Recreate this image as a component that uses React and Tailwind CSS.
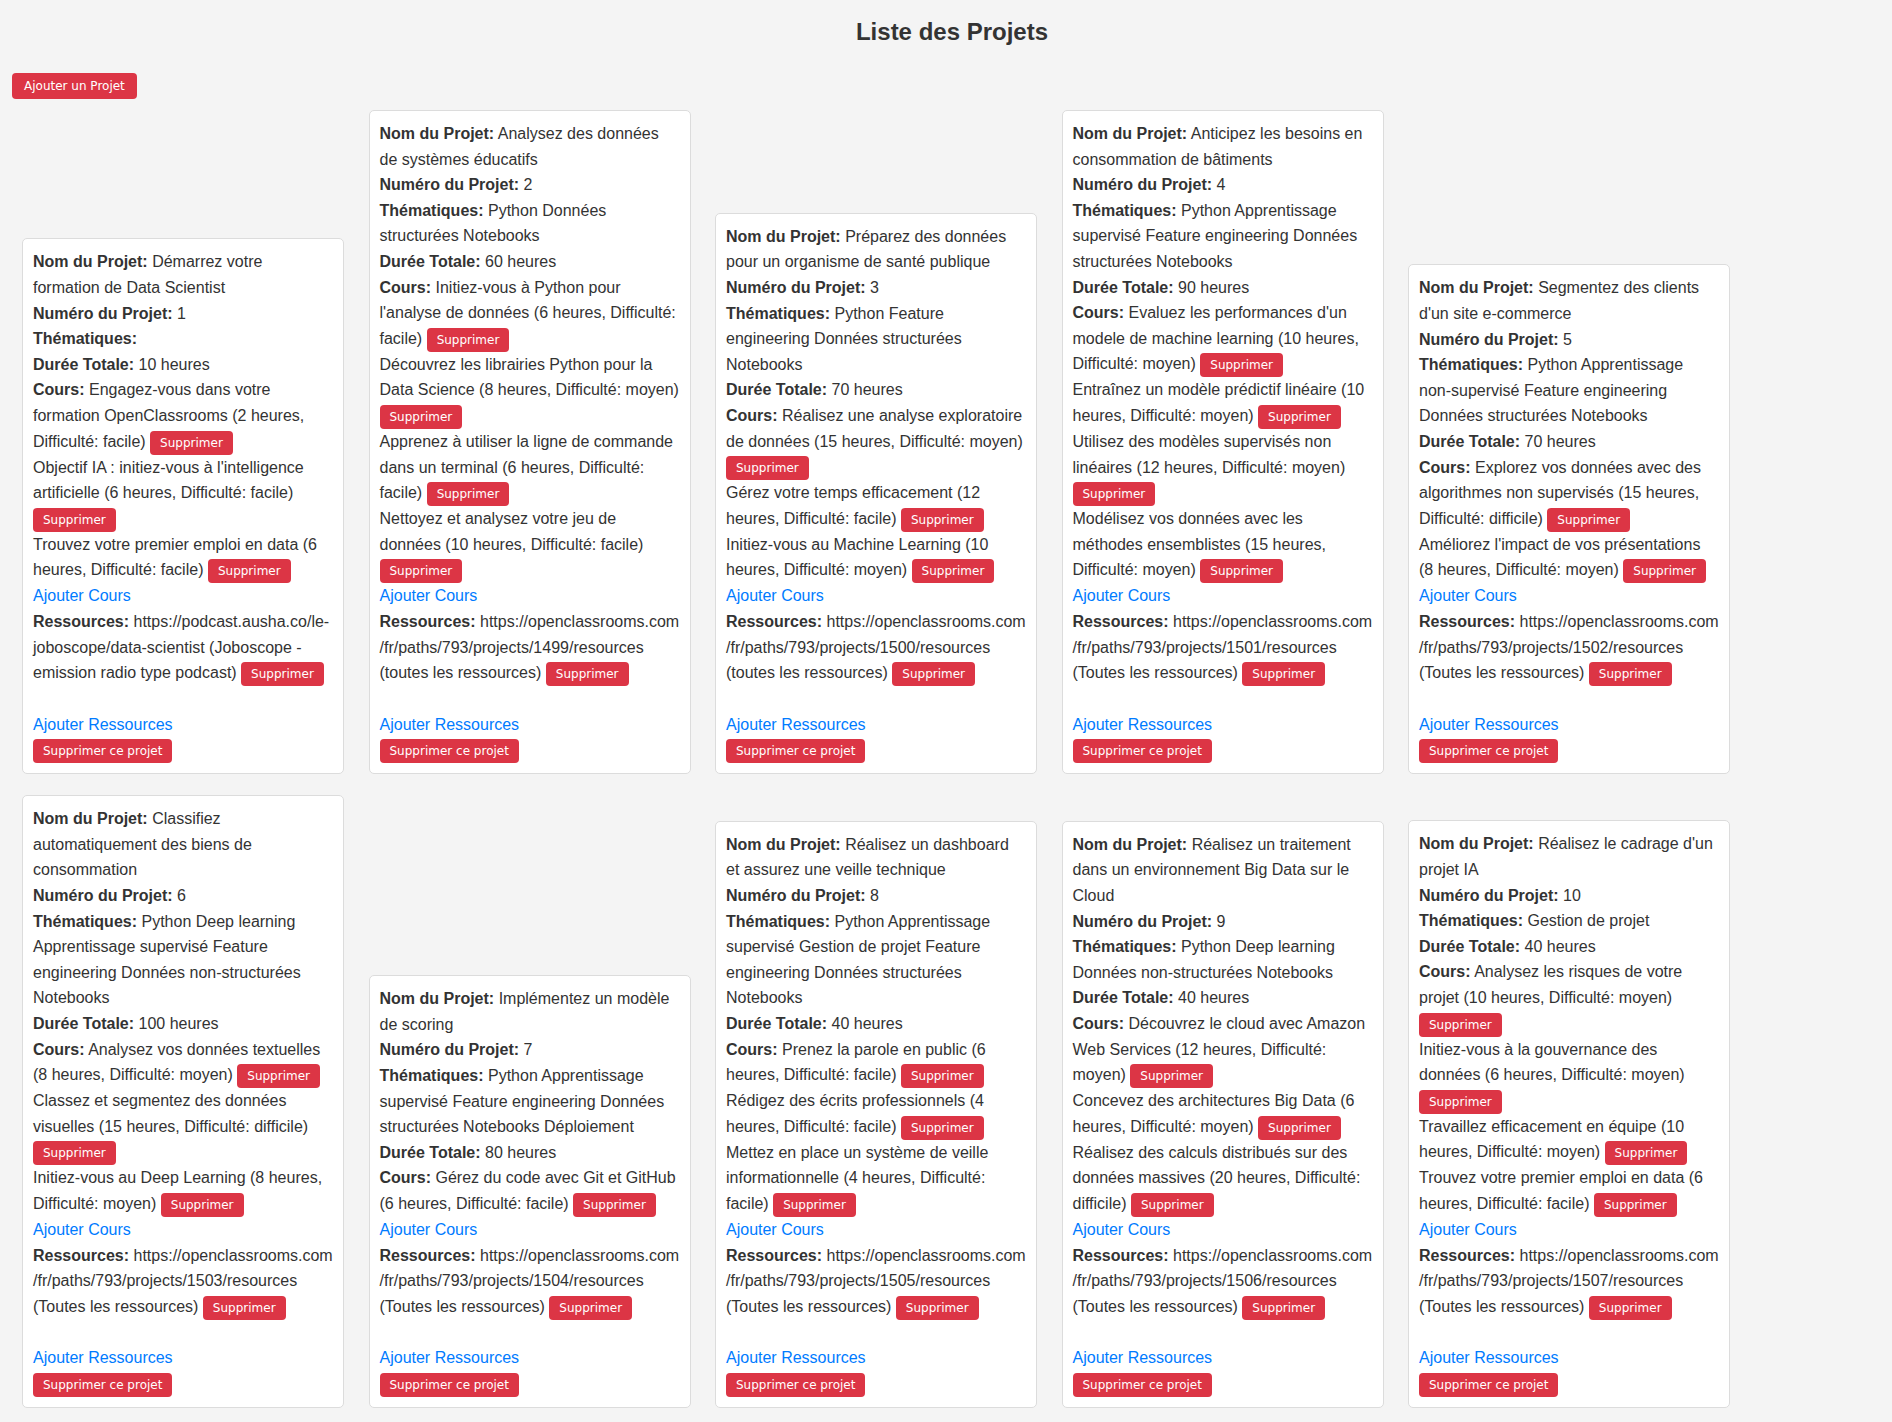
import { Fragment } from 'react';

const oc = (id, label) => ({
    url: 'https://openclassrooms.com',
    path: `/fr/paths/793/projects/${id}/resources`,
    label,
});

const projets = [
    {
        nom: 'Démarrez votre formation de Data Scientist',
        numero: 1,
        thematiques: '',
        duree: 10,
        cours: [
            ['Engagez-vous dans votre formation OpenClassrooms', 2, 'facile'],
            ["Objectif IA : initiez-vous à l'intelligence artificielle", 6, 'facile'],
            ['Trouvez votre premier emploi en data', 6, 'facile'],
        ],
        ressource: { text: 'https://podcast.ausha.co/le-joboscope/data-scientist (Joboscope - emission radio type podcast)' },
    },
    {
        nom: 'Analysez des données de systèmes éducatifs',
        numero: 2,
        thematiques: 'Python Données structurées Notebooks',
        duree: 60,
        cours: [
            ["Initiez-vous à Python pour l'analyse de données", 6, 'facile'],
            ['Découvrez les librairies Python pour la Data Science', 8, 'moyen'],
            ['Apprenez à utiliser la ligne de commande dans un terminal', 6, 'facile'],
            ['Nettoyez et analysez votre jeu de données', 10, 'facile'],
        ],
        ressource: oc(1499, '(toutes les ressources)'),
    },
    {
        nom: 'Préparez des données pour un organisme de santé publique',
        numero: 3,
        thematiques: 'Python Feature engineering Données structurées Notebooks',
        duree: 70,
        cours: [
            ['Réalisez une analyse exploratoire de données', 15, 'moyen'],
            ['Gérez votre temps efficacement', 12, 'facile'],
            ['Initiez-vous au Machine Learning', 10, 'moyen'],
        ],
        ressource: oc(1500, '(toutes les ressources)'),
    },
    {
        nom: 'Anticipez les besoins en consommation de bâtiments',
        numero: 4,
        thematiques: 'Python Apprentissage supervisé Feature engineering Données structurées Notebooks',
        duree: 90,
        cours: [
            ["Evaluez les performances d'un modele de machine learning", 10, 'moyen'],
            ['Entraînez un modèle prédictif linéaire', 10, 'moyen'],
            ['Utilisez des modèles supervisés non linéaires', 12, 'moyen'],
            ['Modélisez vos données avec les méthodes ensemblistes', 15, 'moyen'],
        ],
        ressource: oc(1501, '(Toutes les ressources)'),
    },
    {
        nom: "Segmentez des clients d'un site e-commerce",
        numero: 5,
        thematiques: 'Python Apprentissage non-supervisé Feature engineering Données structurées Notebooks',
        duree: 70,
        cours: [
            ['Explorez vos données avec des algorithmes non supervisés', 15, 'difficile'],
            ["Améliorez l'impact de vos présentations", 8, 'moyen'],
        ],
        ressource: oc(1502, '(Toutes les ressources)'),
    },
    {
        nom: 'Classifiez automatiquement des biens de consommation',
        numero: 6,
        thematiques: 'Python Deep learning Apprentissage supervisé Feature engineering Données non-structurées Notebooks',
        duree: 100,
        cours: [
            ['Analysez vos données textuelles', 8, 'moyen'],
            ['Classez et segmentez des données visuelles', 15, 'difficile'],
            ['Initiez-vous au Deep Learning', 8, 'moyen'],
        ],
        ressource: oc(1503, '(Toutes les ressources)'),
    },
    {
        nom: 'Implémentez un modèle de scoring',
        numero: 7,
        thematiques: 'Python Apprentissage supervisé Feature engineering Données structurées Notebooks Déploiement',
        duree: 80,
        cours: [['Gérez du code avec Git et GitHub', 6, 'facile']],
        ressource: oc(1504, '(Toutes les ressources)'),
    },
    {
        nom: 'Réalisez un dashboard et assurez une veille technique',
        numero: 8,
        thematiques: 'Python Apprentissage supervisé Gestion de projet Feature engineering Données structurées Notebooks',
        duree: 40,
        cours: [
            ['Prenez la parole en public', 6, 'facile'],
            ['Rédigez des écrits professionnels', 4, 'facile'],
            ['Mettez en place un système de veille informationnelle', 4, 'facile'],
        ],
        ressource: oc(1505, '(Toutes les ressources)'),
    },
    {
        nom: 'Réalisez un traitement dans un environnement Big Data sur le Cloud',
        numero: 9,
        thematiques: 'Python Deep learning Données non-structurées Notebooks',
        duree: 40,
        cours: [
            ['Découvrez le cloud avec Amazon Web Services', 12, 'moyen'],
            ['Concevez des architectures Big Data', 6, 'moyen'],
            ['Réalisez des calculs distribués sur des données massives', 20, 'difficile'],
        ],
        ressource: oc(1506, '(Toutes les ressources)'),
    },
    {
        nom: "Réalisez le cadrage d'un projet IA",
        numero: 10,
        thematiques: 'Gestion de projet',
        duree: 40,
        cours: [
            ['Analysez les risques de votre projet', 10, 'moyen'],
            ['Initiez-vous à la gouvernance des données', 6, 'moyen'],
            ['Travaillez efficacement en équipe', 10, 'moyen'],
            ['Trouvez votre premier emploi en data', 6, 'facile'],
        ],
        ressource: oc(1507, '(Toutes les ressources)'),
    },
];

const DeleteButton = ({ children = 'Supprimer' }) => (
    <button className="inline-block bg-[#dc3545] text-white font-['DejaVu_Sans',sans-serif] text-[12px] leading-[18px] px-[10px] py-[3px] rounded-[4px]">
        {children}
    </button>
);

const Ressource = ({ ressource }) => {
    if (ressource.text) return <>{ressource.text}</>;
    return (
        <>
            <span className="whitespace-nowrap">{ressource.url}</span>
            <br />
            <span className="whitespace-nowrap">{ressource.path}</span> {ressource.label}
        </>
    );
};

const ProjetCard = ({ projet }) => (
    <div className="w-[322px] bg-white border border-[#dcdcdc] rounded-[5px] p-[10px] break-words">
        <div>
            <strong>Nom du Projet:</strong> {projet.nom}
        </div>
        <div>
            <strong>Numéro du Projet:</strong> {projet.numero}
        </div>
        <div>
            <strong>Thématiques:</strong> {projet.thematiques}
        </div>
        <div>
            <strong>Durée Totale:</strong> {projet.duree} heures
        </div>
        <div>
            <strong>Cours:</strong>{' '}
            {projet.cours.map(([titre, heures, difficulte], i) => (
                <Fragment key={i}>
                    {titre} ({heures} heures, Difficulté: {difficulte}) <DeleteButton />
                    <br />
                </Fragment>
            ))}
        </div>
        <a href="#" className="block text-[#007bff]">Ajouter Cours</a>
        <div>
            <strong className="whitespace-nowrap">Ressources:</strong> <Ressource ressource={projet.ressource} />{' '}
            <DeleteButton />
        </div>
        <div className="h-[25.6px]" />
        <a href="#" className="block text-[#007bff]">Ajouter Ressources</a>
        <div>
            <DeleteButton>Supprimer ce projet</DeleteButton>
        </div>
    </div>
);

export default function App() {
    return (
        <div className="min-h-screen bg-[#f4f4f4] text-[#333] font-['Liberation_Sans',Arial,sans-serif] text-[16px] leading-[1.6] pl-[12px] pb-[14px]">
            {/* Title */}
            <h1 className="pt-[18px] text-center text-[24px] leading-[28px] font-bold">Liste des Projets</h1>

            <button className="mt-[27px] bg-[#dc3545] text-white font-['DejaVu_Sans',sans-serif] text-[12px] leading-[18px] px-[12px] py-[4px] rounded-[4px]">
                Ajouter un Projet
            </button>

            {/* Projects */}
            <div className="mt-[11px] ml-[10px] flex flex-wrap items-end gap-x-[24.5px] gap-y-[21px]">
                {projets.map((projet) => (
                    <ProjetCard key={projet.numero} projet={projet} />
                ))}
            </div>
        </div>
    );
}
